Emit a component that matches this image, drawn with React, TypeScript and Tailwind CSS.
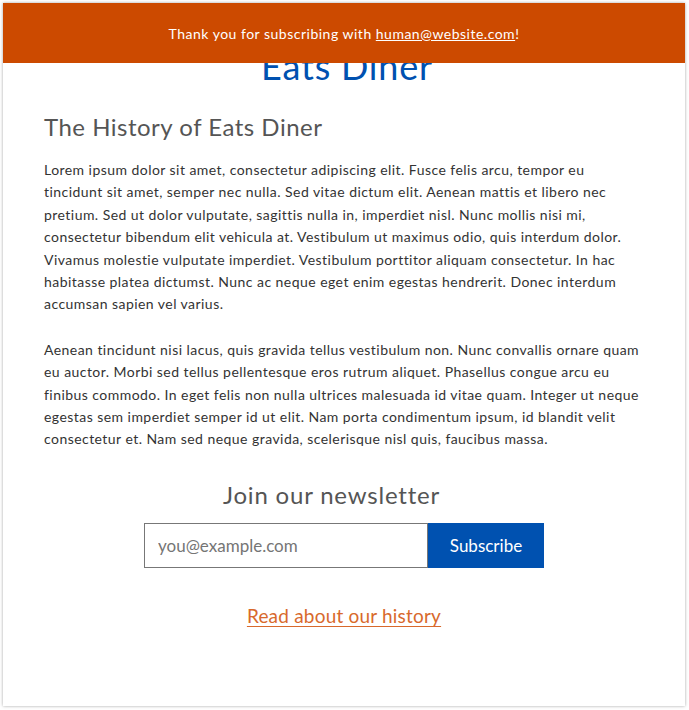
import React from "react";

export default function App() {
  return (
    <div className="bg-white p-[3px] w-[689px] h-[710px]" style={{ fontFamily: "Lato, 'Open Sans', sans-serif" }}>
      <div className="relative h-[703px] w-[682px] bg-white shadow-[0_0_3px_rgba(0,0,0,0.35)] overflow-hidden">
        <div className="absolute top-0 left-0 right-0 h-[60px] bg-[#cc4a00] flex items-center justify-center text-white text-[14px] tracking-[0.5px] z-10">
          <span>
            Thank you for subscribing with <a href="#" className="underline">human@website.com</a>!
          </span>
        </div>
        <div className="pt-[42px]">
          <h1 className="text-center text-[36px] leading-[1.2] text-[#0051b0] tracking-[0.8px] pl-[6px]">Eats Diner</h1>
          <div className="w-[600px] mx-auto mt-[25px]">
            <h2 className="text-[24px] leading-[1.2] text-[#555555] tracking-[0.5px]">The History of Eats Diner</h2>
            <p className="mt-[17px] text-[14px] leading-[1.6] text-[#333333] tracking-[0.45px]">
              Lorem ipsum dolor sit amet, consectetur adipiscing elit. Fusce felis arcu, tempor eu tincidunt sit amet, semper nec nulla. Sed vitae dictum elit. Aenean mattis et libero nec pretium. Sed ut dolor vulputate, sagittis nulla in, imperdiet nisl. Nunc mollis nisi mi, consectetur bibendum elit vehicula at. Vestibulum ut maximus odio, quis interdum dolor. Vivamus molestie vulputate imperdiet. Vestibulum porttitor aliquam consectetur. In hac habitasse platea dictumst. Nunc ac neque eget enim egestas hendrerit. Donec interdum accumsan sapien vel varius.
            </p>
            <p className="mt-[23px] text-[14px] leading-[1.6] text-[#333333] tracking-[0.45px]">
              Aenean tincidunt nisi lacus, quis gravida tellus vestibulum non. Nunc convallis ornare quam eu auctor. Morbi sed tellus pellentesque eros rutrum aliquet. Phasellus congue arcu eu finibus commodo. In eget felis non nulla ultrices malesuada id vitae quam. Integer ut neque egestas sem imperdiet semper id ut elit. Nam porta condimentum ipsum, id blandit velit consectetur et. Nam sed neque gravida, scelerisque nisl quis, faucibus massa.
            </p>
          </div>
          <div className="mt-[30px] flex flex-col items-center">
            <h3 className="text-[24px] leading-[1.2] text-[#555555] tracking-[0.8px] mr-[25px]">Join our newsletter</h3>
            <form className="mt-[14px] flex" onSubmit={(e) => e.preventDefault()}>
              <input
                type="email"
                placeholder="you@example.com"
                className="w-[284px] h-[45px] border border-[#777777] px-[13px] text-[17px] text-[#333] placeholder:text-[#757575] outline-none"
              />
              <button type="submit" className="w-[116px] h-[45px] bg-[#0051b0] text-white text-[17px]">
                Subscribe
              </button>
            </form>
            <a href="#" className="mt-[34px] text-[19px] text-[#d8692c] underline underline-offset-[3px] tracking-[0.2px]">
              Read about our history
            </a>
          </div>
        </div>
      </div>
    </div>
  );
}
